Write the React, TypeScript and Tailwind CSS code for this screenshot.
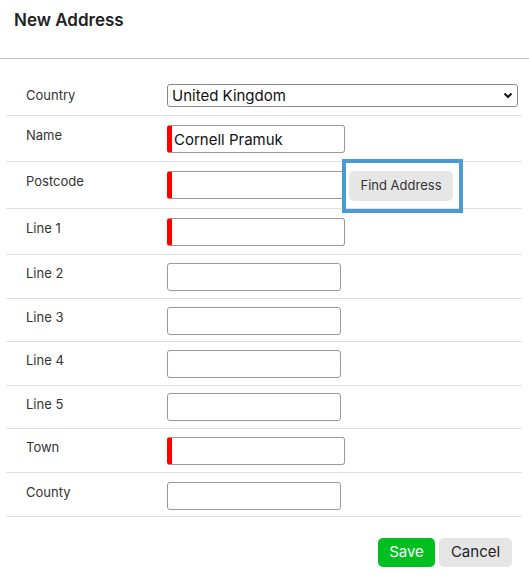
import React from "react";

type Row = { label: string; h: number; kind: "select" | "input" | "postcode"; required?: boolean; value?: string; itop: number; ltop: number };

const rows: Row[] = [
  { label: "Country", h: 44, kind: "select", itop: 12, ltop: 14 },
  { label: "Name", h: 46, kind: "input", required: true, value: "Cornell Pramuk", itop: 9, ltop: 10 },
  { label: "Postcode", h: 47, kind: "postcode", required: true, itop: 9, ltop: 10 },
  { label: "Line 1", h: 46, kind: "input", required: true, itop: 9, ltop: 10 },
  { label: "Line 2", h: 44, kind: "input", itop: 8, ltop: 9 },
  { label: "Line 3", h: 43, kind: "input", itop: 8, ltop: 9 },
  { label: "Line 4", h: 44, kind: "input", itop: 8, ltop: 9 },
  { label: "Line 5", h: 43, kind: "input", itop: 7, ltop: 9 },
  { label: "Town", h: 44, kind: "input", required: true, itop: 8, ltop: 9 },
  { label: "County", h: 44, kind: "input", itop: 9, ltop: 10 },
];

function Field({ required, value }: { required?: boolean; value?: string }) {
  return (
    <input
      readOnly
      value={value ?? ""}
      className={
        "h-[28px] rounded-[3px] border border-[#9a9a9a] bg-white px-[2px] text-[15px] text-[#111] outline-none " +
        (required ? "w-[178px] border-l-[5px] border-l-[#ff0000]" : "w-[174px]")
      }
    />
  );
}

export default function App() {
  return (
    <div className="w-[529px] h-[586px] bg-white" style={{ fontFamily: "Inter, 'Noto Sans', sans-serif" }}>
      <div className="h-[59px] border-b border-[#bdbdbd] px-[14px] pt-[9px]">
        <h1 className="text-[17px] font-semibold text-[#222] leading-[22px]">New Address</h1>
      </div>
      <div className="mx-[6px] mt-[13px] w-[516px]">
        {rows.map((r) => (
          <div key={r.label} className="flex border-b border-[#e0e0e0]" style={{ height: r.h }}>
            <div
              className="w-[161px] shrink-0 pl-[20px] text-[13px] leading-[18px] text-[#333]"
              style={{ paddingTop: r.ltop }}
            >
              {r.label}
            </div>
            <div className="flex-1" style={{ paddingTop: r.itop }}>
              {r.kind === "select" && (
                <div className="flex h-[23px] w-[351px] items-center justify-between rounded-[3px] border border-[#8a8a8a] bg-white pl-[4px] pr-[4px]">
                  <span className="text-[15px] leading-[20px] text-[#111]">United Kingdom</span>
                  <svg width="10" height="7" viewBox="0 0 10 7">
                    <path d="M1.5 1.5 L5 5 L8.5 1.5" fill="none" stroke="#111" strokeWidth="2" />
                  </svg>
                </div>
              )}
              {r.kind === "input" && <Field required={r.required} value={r.value} />}
              {r.kind === "postcode" && (
                <div className="relative flex items-start gap-[4px]">
                  <Field required />
                  <button className="h-[30px] w-[104px] rounded-[5px] bg-[#e6e6e6] text-[13px] text-[#333]">
                    Find Address
                  </button>
                  <div className="pointer-events-none absolute left-[175px] top-[-12px] h-[54px] w-[121px] border-[4px] border-[#4a9bd1]" />
                </div>
              )}
            </div>
          </div>
        ))}
      </div>
      <div className="flex justify-end gap-[4px] pr-[17px] pt-[21px]">
        <button className="h-[29px] w-[57px] rounded-[5px] bg-[#00bf1f] text-[15px] text-white">Save</button>
        <button className="h-[29px] w-[73px] rounded-[5px] bg-[#e5e5e5] text-[15px] text-[#222]">Cancel</button>
      </div>
    </div>
  );
}
